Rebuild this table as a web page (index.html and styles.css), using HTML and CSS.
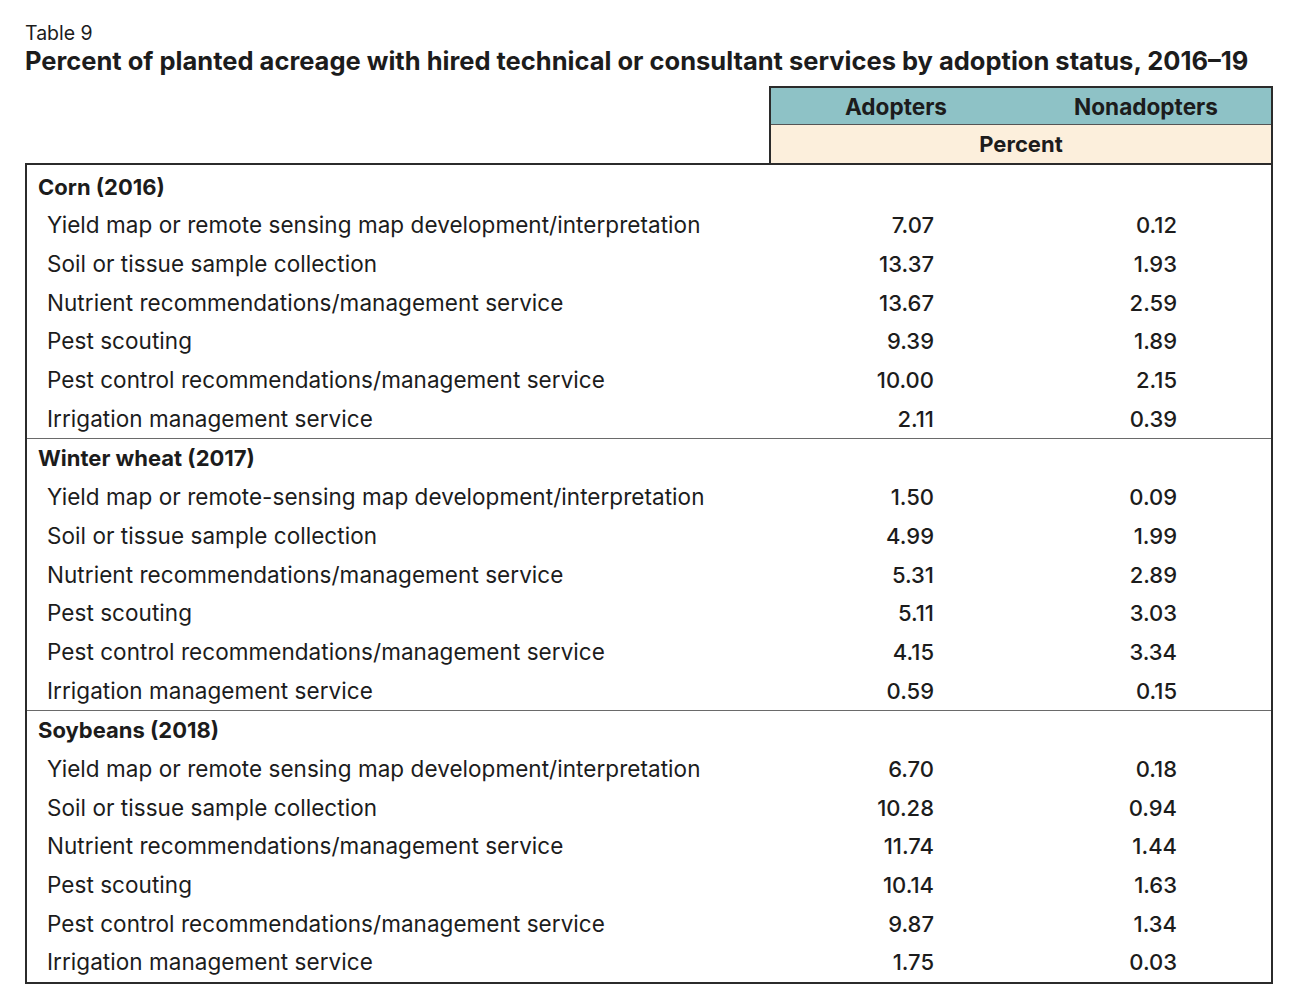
FILE: index.html
```html
<!DOCTYPE html>
<html>
<head>
<meta charset="utf-8">
<link rel="stylesheet" href="styles.css">
</head>
<body>
<div class="page">
  <div class="label">Table 9</div>
  <h1 class="title">Percent of planted acreage with hired technical or consultant services by adoption status, 2016–19</h1>
  <div class="head-wrap">
    <div class="head-box">
      <div class="head-top">
        <div class="hcol">Adopters</div>
        <div class="hcol">Nonadopters</div>
      </div>
      <div class="head-unit">Percent</div>
    </div>
  </div>
  <table class="data">
    <colgroup><col class="c-lbl"><col class="c-a"><col class="c-n"></colgroup>
    <tbody>
      <tr class="group first"><td colspan="3">Corn (2016)</td></tr>
      <tr><td class="lbl">Yield map or remote sensing map development/interpretation</td><td class="a">7.07</td><td class="n">0.12</td></tr>
      <tr><td class="lbl">Soil or tissue sample collection</td><td class="a">13.37</td><td class="n">1.93</td></tr>
      <tr><td class="lbl">Nutrient recommendations/management service</td><td class="a">13.67</td><td class="n">2.59</td></tr>
      <tr><td class="lbl">Pest scouting</td><td class="a">9.39</td><td class="n">1.89</td></tr>
      <tr><td class="lbl">Pest control recommendations/management service</td><td class="a">10.00</td><td class="n">2.15</td></tr>
      <tr><td class="lbl">Irrigation management service</td><td class="a">2.11</td><td class="n">0.39</td></tr>
    </tbody>
    <tbody>
      <tr class="group"><td colspan="3">Winter wheat (2017)</td></tr>
      <tr><td class="lbl">Yield map or remote-sensing map development/interpretation</td><td class="a">1.50</td><td class="n">0.09</td></tr>
      <tr><td class="lbl">Soil or tissue sample collection</td><td class="a">4.99</td><td class="n">1.99</td></tr>
      <tr><td class="lbl">Nutrient recommendations/management service</td><td class="a">5.31</td><td class="n">2.89</td></tr>
      <tr><td class="lbl">Pest scouting</td><td class="a">5.11</td><td class="n">3.03</td></tr>
      <tr><td class="lbl">Pest control recommendations/management service</td><td class="a">4.15</td><td class="n">3.34</td></tr>
      <tr><td class="lbl">Irrigation management service</td><td class="a">0.59</td><td class="n">0.15</td></tr>
    </tbody>
    <tbody>
      <tr class="group"><td colspan="3">Soybeans (2018)</td></tr>
      <tr><td class="lbl">Yield map or remote sensing map development/interpretation</td><td class="a">6.70</td><td class="n">0.18</td></tr>
      <tr><td class="lbl">Soil or tissue sample collection</td><td class="a">10.28</td><td class="n">0.94</td></tr>
      <tr><td class="lbl">Nutrient recommendations/management service</td><td class="a">11.74</td><td class="n">1.44</td></tr>
      <tr><td class="lbl">Pest scouting</td><td class="a">10.14</td><td class="n">1.63</td></tr>
      <tr><td class="lbl">Pest control recommendations/management service</td><td class="a">9.87</td><td class="n">1.34</td></tr>
      <tr><td class="lbl">Irrigation management service</td><td class="a">1.75</td><td class="n">0.03</td></tr>
    </tbody>
  </table>
</div>
</body>
</html>
```
FILE: styles.css
```css
html, body {
  margin: 0;
  padding: 0;
  background: #ffffff;
}
body {
  font-family: Inter, "Liberation Sans", sans-serif;
  color: #1c1c1c;
}
.page {
  width: 1248px;
  padding: 22px 0 0 25px;
}
.label {
  font-size: 19.5px;
  line-height: 23px;
  font-weight: 400;
}
.title {
  margin: 0;
  font-size: 25.5px;
  line-height: 31px;
  font-weight: 700;
  white-space: nowrap;
}
.head-wrap {
  display: flex;
  justify-content: flex-end;
  margin-top: 10px;
}
.head-box {
  width: 500px;
  border: 2px solid #2b2b2b;
  border-bottom: none;
}
.head-top {
  display: flex;
  background: #8ec2c6;
  border-bottom: 1px solid #555;
  height: 36px;
  align-items: center;
}
.hcol {
  flex: 1;
  text-align: center;
  font-size: 22.6px;
  font-weight: 700;
}
.head-unit {
  background: #fcefdc;
  height: 38px;
  line-height: 38px;
  text-align: center;
  font-size: 22px;
  font-weight: 700;
}
.data {
  width: 1248px;
  border-collapse: separate;
  border-spacing: 0;
  border: 2px solid #2b2b2b;
  table-layout: fixed;
  font-size: 22px;
}
.c-lbl { width: 742px; }
.c-a { width: 251px; }
.c-n { width: 251px; }
.data td {
  height: 38.7px;
  padding: 0;
  vertical-align: middle;
  white-space: nowrap;
  line-height: 26px;
}
.data .group.first td {
  height: 39px;
  padding-top: 2px;
}
.data tbody + tbody tr.group td {
  border-top: 1px solid #6a6a6a;
}
.data .group td {
  font-weight: 700;
  padding-left: 11px;
}
.data .lbl {
  padding-left: 20px;
  font-size: 22.5px;
  letter-spacing: 0.05px;
}
.data .a {
  text-align: right;
  padding-right: 86px;
  font-weight: 500;
}
.data .n {
  text-align: right;
  padding-right: 94px;
  font-weight: 500;
}
```
